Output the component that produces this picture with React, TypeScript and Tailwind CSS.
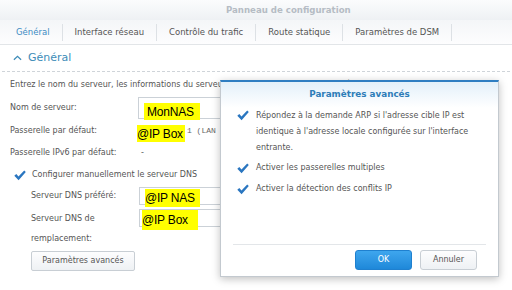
import React from "react";

const Check = ({ className = "" }: { className?: string }) => (
  <svg viewBox="0 0 12 11" className={`w-[12px] h-[11px] ${className}`}>
    <path d="M0.3 5.8 L2.3 4.1 L4.5 6.4 L10.2 0.4 L11.8 1.9 L4.6 10.3 Z" fill="#2a76c0" />
  </svg>
);

const yellow =
  "absolute bg-[#ffff00] flex items-center whitespace-nowrap font-['Liberation_Sans',sans-serif] text-[12px] text-black tracking-[-0.2px]";

export default function App() {
  const tabs = ["Général", "Interface réseau", "Contrôle du trafic", "Route statique", "Paramètres de DSM"];

  return (
    <div className="relative w-[512px] h-[290px] overflow-hidden bg-white font-['DejaVu_Sans',sans-serif] text-[8px] text-[#555]">
      {/* title bar */}
      <div className="h-[20px] bg-gradient-to-b from-[#fbfcfd] to-[#eef1f4] flex items-center pl-[226px]">
        <span className="font-bold text-[8.6px] text-[#b5bcc4]">Panneau de configuration</span>
      </div>

      {/* tabs */}
      <div className="h-[25px] bg-gradient-to-b from-[#f4f6f8] to-[#fdfdfe] border-b border-[#e2e5e8] flex items-center pl-[4px]">
        {tabs.map((t, i) => (
          <div
            key={t}
            className={`h-[17px] flex items-center px-[12px] border-r border-[#dde1e5] text-[8.5px] ${
              i === 0 ? "text-[#3b8bc3]" : "text-[#555]"
            }`}
          >
            {t}
          </div>
        ))}
      </div>

      {/* section header */}
      <div className="mx-[2px] h-[27px] border-b border-dashed border-[#cfd4d9] flex items-center pl-[11px] gap-[6px] text-[#3d8cb8]">
        <svg viewBox="0 0 10 6" className="w-[9px] h-[6px]">
          <path d="M1 5 L5 1.2 L9 5" fill="none" stroke="#3d8cb8" strokeWidth="1.4" />
        </svg>
        <span className="text-[11px]">Général</span>
      </div>

      {/* form */}
      <div className="pl-[10px] pt-[7px]">
        <div className="h-[12px] flex items-center whitespace-nowrap">
          Entrez le nom du serveur, les informations du serveur DNS et de la passerelle par défaut.
        </div>

        <div className="mt-[6px] h-[22px] flex items-center">
          <span className="w-[128px]">Nom de serveur:</span>
          <div className="w-[200px] h-[22px] border border-[#cbd1d7] bg-white" />
        </div>

        <div className="mt-[2px] h-[20px] flex items-center">
          <span className="w-[177px]">Passerelle par défaut:</span>
          <span className="font-['Liberation_Mono',monospace] text-[8px] text-[#666] whitespace-nowrap">1 (LAN 1)</span>
        </div>

        <div className="mt-[2px] h-[20px] flex items-center">
          <span className="w-[131px]">Passerelle IPv6 par défaut:</span>
          <span>-</span>
        </div>

        <div className="mt-[2px] h-[20px] flex items-center gap-[6px] pl-[4px]">
          <Check />
          <span>Configurer manuellement le serveur DNS</span>
        </div>

        <div className="pl-[21px]">
          <div className="mt-[1px] h-[19px] flex items-center">
            <span className="w-[108px]">Serveur DNS préféré:</span>
            <div className="w-[200px] h-[18px] border border-[#cbd1d7] bg-white" />
          </div>

          <div className="mt-[4px] flex items-start">
            <div className="w-[108px] leading-[20px]">
              <div>Serveur DNS de</div>
              <div>remplacement:</div>
            </div>
            <div className="w-[200px] h-[18px] border border-[#cbd1d7] bg-white" />
          </div>

          <button className="mt-[2px] w-[104px] h-[20px] border border-[#c8ced4] rounded-[2px] bg-gradient-to-b from-[#fdfdfe] to-[#eef1f4] text-[8px] text-[#555]">
            Paramètres avancés
          </button>
        </div>
      </div>

      {/* yellow annotations */}
      <div className={`${yellow} left-[144px] top-[103px] w-[56px] h-[17px] pl-[3px]`}>MonNAS</div>
      <div className={`${yellow} left-[137px] top-[125px] w-[48px] h-[17px]`}>@IP Box</div>
      <div className={`${yellow} left-[145px] top-[189px] w-[55px] h-[18px]`}>@IP NAS</div>
      <div className={`${yellow} left-[142px] top-[210px] w-[56px] h-[20px]`}>@IP Box</div>

      {/* dialog */}
      <div className="absolute left-[220px] top-[80px] w-[279px] h-[197px] bg-white border border-[#c3c9cf] border-t-[2px] border-t-[#2f7ec2] shadow-[0_2px_8px_rgba(0,0,0,0.25)] flex flex-col">
        <div className="h-[26px] bg-gradient-to-b from-[#e3f0fa] to-white flex items-center justify-center">
          <span className="font-bold text-[8.8px] text-[#2e7db8]">Paramètres avancés</span>
        </div>
        <div className="pl-[16px] pr-[10px] flex flex-col">
          <div className="flex gap-[7px]">
            <Check className="mt-[2px] shrink-0" />
            <div className="leading-[16px]">
              Répondez à la demande ARP si l'adresse cible IP est identique à l'adresse locale configurée sur l'interface entrante.
            </div>
          </div>
          <div className="mt-[4px] h-[16px] flex items-center gap-[7px]">
            <Check />
            <span>Activer les passerelles multiples</span>
          </div>
          <div className="mt-[5px] h-[16px] flex items-center gap-[7px]">
            <Check />
            <span>Activer la détection des conflits IP</span>
          </div>
        </div>
        <div className="mt-auto mx-[12px] border-t border-[#e3e6e9] pt-[5px] pb-[6px] flex justify-end gap-[8px] pr-[9px]">
          <button className="w-[57px] h-[20px] rounded-[3px] border border-[#1f80cf] bg-gradient-to-b from-[#3ea6ee] to-[#1e88d9] text-white text-[8px]">
            OK
          </button>
          <button className="w-[57px] h-[20px] rounded-[3px] border border-[#c8ced4] bg-gradient-to-b from-[#fdfdfe] to-[#eef1f4] text-[#555] text-[8px]">
            Annuler
          </button>
        </div>
      </div>
    </div>
  );
}
